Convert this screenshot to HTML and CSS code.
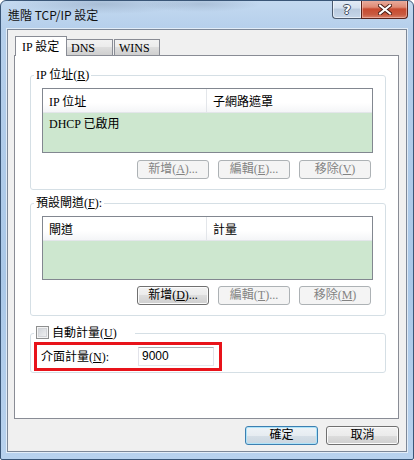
FILE: index.html
```html
<!DOCTYPE html>
<html lang="zh-Hant">
<head>
<meta charset="utf-8">
<title>進階 TCP/IP 設定</title>
<link rel="stylesheet" href="styles.css">
</head>
<body>
<div class="window">
  <div class="titlebar">
    <span class="title">進階 TCP/IP 設定</span>
    <div class="caption-btns">
      <div class="cap help"><span class="qmark">?</span></div>
      <div class="cap close">
        <svg width="14" height="11" viewBox="0 0 14 11">
          <path d="M2 1.5 L12 9.5 M12 1.5 L2 9.5" stroke="#4a1d16" stroke-width="4" stroke-linecap="square"/>
          <path d="M2 1.5 L12 9.5 M12 1.5 L2 9.5" stroke="#ffffff" stroke-width="2" stroke-linecap="square"/>
        </svg>
      </div>
    </div>
  </div>
  <div class="client">
    <div class="tabs">
      <div class="tab active">IP 設定</div>
      <div class="tab">DNS</div>
      <div class="tab">WINS</div>
    </div>
    <div class="panel">
      <fieldset class="group g1">
        <legend class="glabel">IP 位址(<u>R</u>)</legend>
        <div class="list lv1">
          <div class="lv-head">
            <div class="col c1">IP 位址</div>
            <div class="col c2">子網路遮罩</div>
          </div>
          <div class="lv-body">
            <div class="row">DHCP 已啟用</div>
          </div>
        </div>
        <div class="btnrow">
          <button class="btn" disabled>新增(<u>A</u>)...</button>
          <button class="btn" disabled>編輯(<u>E</u>)...</button>
          <button class="btn" disabled>移除(<u>V</u>)</button>
        </div>
      </fieldset>
      <fieldset class="group g2">
        <legend class="glabel">預設閘道(<u>F</u>):</legend>
        <div class="list lv2">
          <div class="lv-head">
            <div class="col c1">閘道</div>
            <div class="col c2">計量</div>
          </div>
          <div class="lv-body"></div>
        </div>
        <div class="btnrow">
          <button class="btn">新增(<u>D</u>)...</button>
          <button class="btn" disabled>編輯(<u>T</u>)...</button>
          <button class="btn" disabled>移除(<u>M</u>)</button>
        </div>
      </fieldset>
      <fieldset class="group g3">
        <legend class="glabel chklegend"><span class="chk"></span><span class="chktext">自動計量(<u>U</u>)</span></legend>
        <div class="highlight">
          <span class="flabel">介面計量(<u>N</u>):</span>
          <div class="textbox">9000</div>
        </div>
      </fieldset>
    </div>
    <div class="footer">
      <button class="btn dlg default">確定</button>
      <button class="btn dlg">取消</button>
    </div>
  </div>
</div>
</body>
</html>
```
FILE: styles.css
```css
* { box-sizing: border-box; }

body {
  margin: 0;
  background: #ffffff;
  font: 12px/14px "Liberation Serif", "Noto Sans CJK TC", serif;
  color: #000;
}

.window {
  width: 414px;
  height: 460px;
  border: 1px solid #3a5677;
  border-radius: 6px 6px 2px 2px;
  background:
    radial-gradient(ellipse 90px 10px at 100px 3px, rgba(120,140,165,0.35), transparent),
    radial-gradient(ellipse 60px 8px at 200px 3px, rgba(120,140,165,0.3), transparent),
    linear-gradient(180deg, #c3d9f0 0, #b5cfeb 28px, #aac8e8 60%, #b8d2ee 100%);
  display: flex;
  flex-direction: column;
  overflow: hidden;
}

.titlebar {
  height: 28px;
  display: flex;
  align-items: flex-start;
  padding-left: 7px;
  padding-right: 5px;
  flex: none;
}

.title {
  font-family: "Noto Sans CJK TC", "Liberation Sans", sans-serif;
  font-size: 12px;
  line-height: 16px;
  margin-top: 6px;
  color: #111;
}

.caption-btns {
  margin-left: auto;
  margin-top: -1px;
  display: flex;
  height: 19px;
}

.cap {
  height: 19px;
  border: 1px solid #4b5a6e;
  border-top: none;
  display: flex;
  align-items: center;
  justify-content: center;
}

.help {
  width: 29px;
  border-radius: 0 0 0 4px;
  border-right: none;
  background: linear-gradient(180deg, #e4ecf6 0, #d3e0ef 45%, #b9cade 50%, #c6d6e9 100%);
  box-shadow: inset 0 0 0 1px rgba(255,255,255,0.55);
}

.qmark {
  font: bold 13px/13px "DejaVu Sans", sans-serif;
  color: #fff;
  text-shadow: 1px 0 #3d4a5c, -1px 0 #3d4a5c, 0 1px #3d4a5c, 0 -1px #3d4a5c;
}

.close {
  width: 47px;
  border-color: #5a221a;
  border-radius: 0 0 4px 0;
  background: linear-gradient(180deg, #eab0a2 0, #de8a74 40%, #c84a30 50%, #c85a40 80%, #d9806a 100%);
  box-shadow: inset 0 0 0 1px rgba(255,220,210,0.45);
}

.client {
  margin: 0 6px 7px 6px;
  height: 423px;
  border: 1px solid #7d8898;
  background: #f0f0f0;
  box-shadow: 0 0 0 1px rgba(255,255,255,0.6);
  padding: 6px 7px 0 6px;
  display: flex;
  flex-direction: column;
}

.tabs {
  height: 19px;
  display: flex;
  align-items: flex-end;
  padding-left: 1px;
}

.tab {
  height: 16px;
  width: 46px;
  border: 1px solid #898c95;
  border-bottom: none;
  background: linear-gradient(180deg, #f2f2f2 0, #ebebeb 50%, #dddddd 50%, #cfcfcf 100%);
  padding: 2px 0 0 4px;
  line-height: 13px;
  white-space: nowrap;
}

.tab + .tab { border-left: none; }
.tab:nth-child(3) { border-left: 1px solid #898c95; margin-left: 1px; width: 46px; }

.tab.active {
  width: 52px;
  height: 20px;
  margin-bottom: -1px;
  background: #ffffff;
  position: relative;
  z-index: 1;
  padding: 4px 0 0 6px;
}

.tab.active + .tab { border-left: none; width: 46px; }

.panel {
  height: 364px;
  border: 1px solid #898c95;
  background: #ffffff;
  padding: 12px 12px 0 15px;
  display: flex;
  flex-direction: column;
}

.group {
  margin: 0;
  border: 1px solid #d5dfe5;
  border-radius: 3px;
  padding: 6px 12px 10px 11px;
  min-width: 0;
}

.glabel {
  padding: 0 2px;
  margin-left: -8px;
  line-height: 14px;
  font-size: 12px;
}

.g2 { margin-top: 6px; }
.g3 { margin-top: 10px; padding: 2px 0 1px 3px; }

.list {
  border: 1px solid #828790;
  background: #cde7cf;
  display: flex;
  flex-direction: column;
}

.lv1 { height: 65px; }
.lv2 { height: 64px; }

.lv-head {
  height: 24px;
  display: flex;
  background: linear-gradient(180deg, #ffffff 0, #ffffff 60%, #f4f5f7 100%);
  border-bottom: 1px solid #e3e6ea;
  flex: none;
}

.col {
  padding: 6px 0 0 6px;
  white-space: nowrap;
}

.c1 { width: 164px; border-right: 1px solid #e3e6ea; }
.c2 { flex: 1; }

.row {
  padding: 4px 6px 0 6px;
  white-space: nowrap;
}

.btnrow {
  display: flex;
  justify-content: flex-end;
  gap: 9px;
  margin-top: 7px;
  margin-right: 2px;
}

.g2 .btnrow { margin-top: 6px; }

.btn {
  width: 72px;
  height: 19px;
  padding: 0;
  border: 1px solid #707070;
  border-radius: 3px;
  background: linear-gradient(180deg, #f2f2f2 0, #ebebeb 50%, #dddddd 50%, #cfcfcf 100%);
  box-shadow: inset 0 0 0 1px #fbfbfb;
  font: 12px/15px "Liberation Serif", "Noto Sans CJK TC", serif;
  color: #000;
  white-space: nowrap;
}

.btn:disabled {
  border-color: #adb2b5;
  background: #f4f4f4;
  box-shadow: none;
  color: #838383;
}

.chklegend {
  margin-left: 0;
  padding: 0 0 0 2px;
  width: 101px;
  white-space: nowrap;
}

.chk {
  display: inline-block;
  width: 13px;
  height: 13px;
  border: 1px solid #8e8f8f;
  background: linear-gradient(135deg, #cbcfd5 0, #f6f6f6 100%);
  box-shadow: inset 0 0 0 1px #f4f4f4, inset 0 0 0 2px #d2d4d8;
  vertical-align: -2px;
  margin-right: 3px;
}

.highlight {
  width: 188px;
  height: 29px;
  border: 3px solid #e8131a;
  display: flex;
  align-items: center;
  padding: 0 5px 0 4px;
}

.flabel {
  flex: 1;
  white-space: nowrap;
}

.textbox {
  width: 76px;
  height: 19px;
  background: #fff;
  border: 1px solid #e2e3ea;
  border-top-color: #abadb3;
  border-bottom-color: #e3e9ef;
  font: 12px/17px "Liberation Sans", "Noto Sans", sans-serif;
  padding-left: 3px;
}

.footer {
  margin-top: 7px;
  display: flex;
  justify-content: flex-end;
  gap: 8px;
}

.btn.dlg {
  width: 73px;
}

.btn.default {
  border-color: #3c7fb1;
  box-shadow: inset 0 0 0 1px #aee3f8;
  background: linear-gradient(180deg, #eef3f7 0, #e6ecf1 50%, #d6dfe7 50%, #cad6e0 100%);
}
```
